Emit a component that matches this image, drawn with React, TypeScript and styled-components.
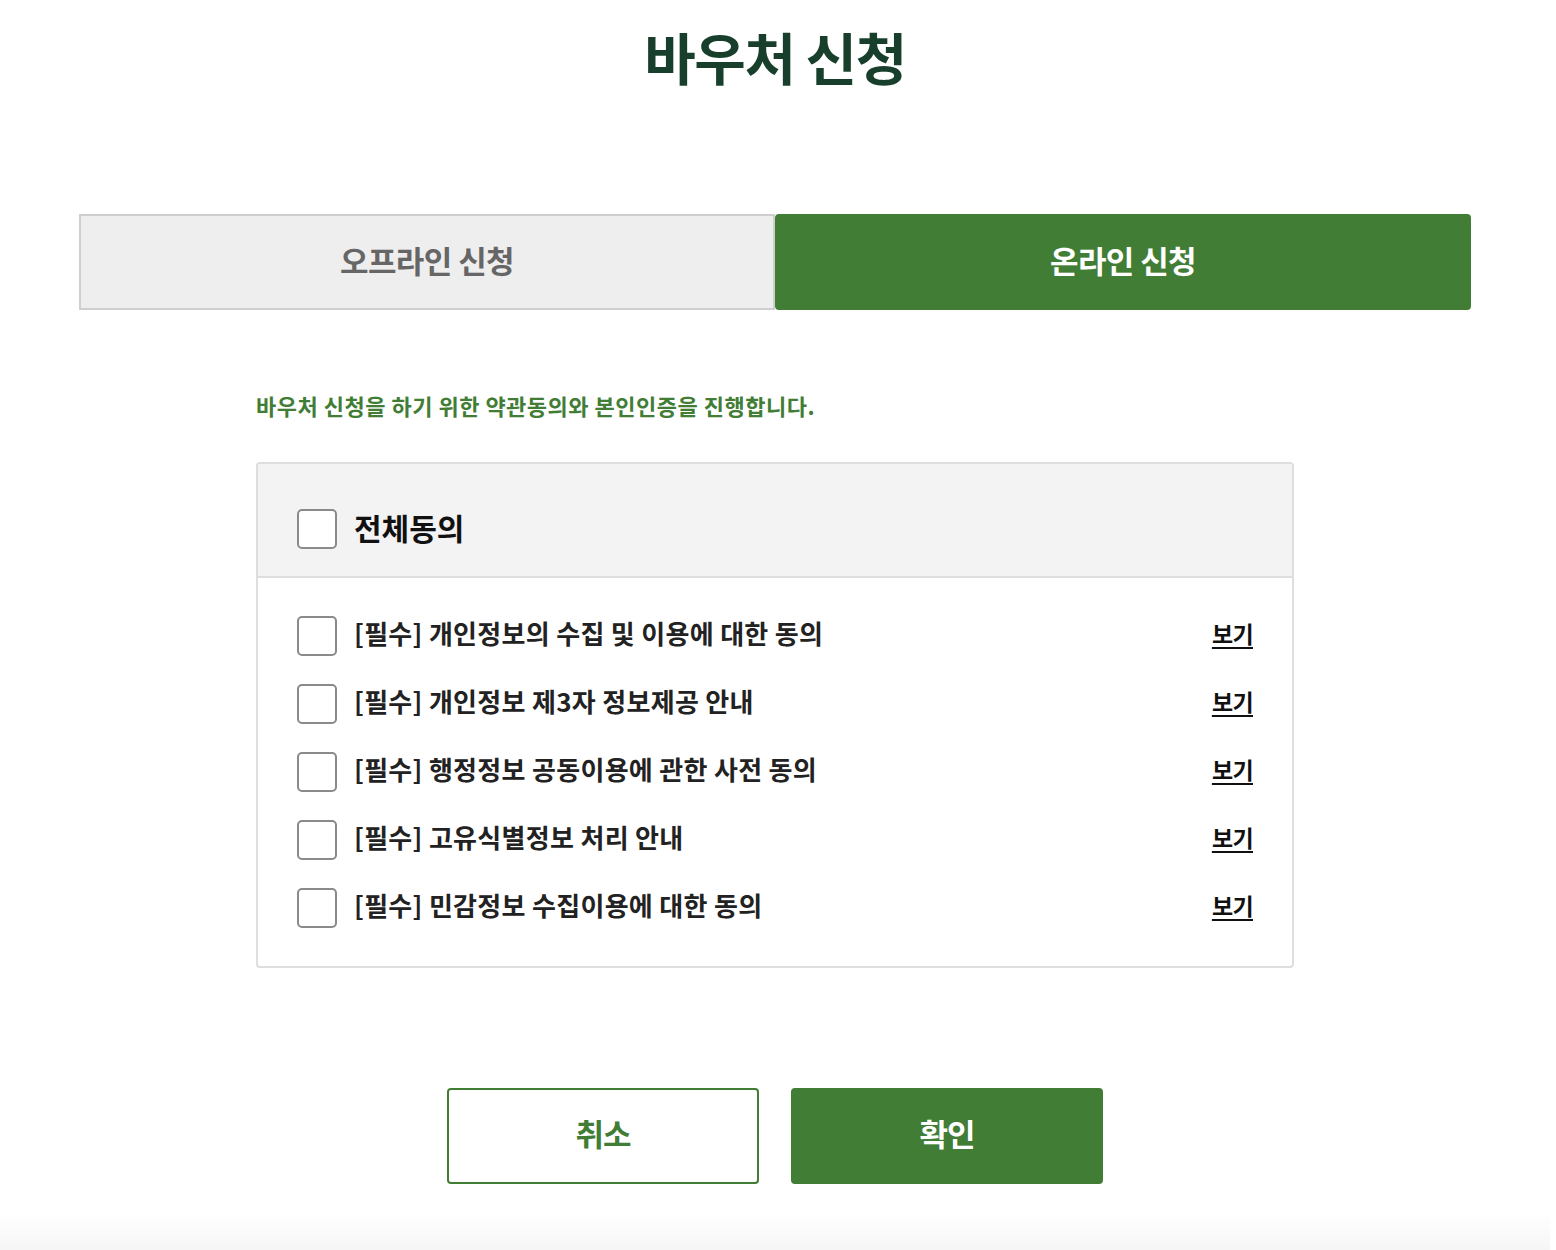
import React from "react";
import styled, { createGlobalStyle } from "styled-components";

const GlobalStyle = createGlobalStyle`
  html, body {
    margin: 0;
    padding: 0;
    background: #fff;
  }
  body {
    font-family: "Noto Sans CJK KR", "Noto Sans", sans-serif;
    color: #222;
  }
`;

const GREEN = "#417d35";

const Page = styled.div`
  width: 1550px;
  min-height: 1250px;
  display: flex;
  flex-direction: column;
  align-items: center;
  background: linear-gradient(to bottom, #fff 0, #fff 1212px, #f6f6f6 1250px);
`;

const Title = styled.h1`
  margin: 14px 0 0;
  font-size: 56px;
  line-height: 84px;
  font-weight: 700;
  letter-spacing: -1.5px;
  color: #173f2b;
`;

const Tabs = styled.div`
  margin-top: 116px;
  width: 1392px;
  display: grid;
  grid-template-columns: 1fr 1fr;
`;

const Tab = styled.button<{ $active?: boolean }>`
  height: 96px;
  box-sizing: border-box;
  display: flex;
  align-items: center;
  justify-content: center;
  font-family: inherit;
  font-size: 31px;
  font-weight: 700;
  letter-spacing: -0.6px;
  cursor: pointer;
  border: ${(p) => (p.$active ? "none" : "2px solid #cfcfcf")};
  border-radius: ${(p) => (p.$active ? "4px" : "0")};
  background: ${(p) => (p.$active ? GREEN : "#eeeeee")};
  color: ${(p) => (p.$active ? "#fff" : "#666")};
  padding: 0 0 6px;
`;

const Content = styled.div`
  width: 1038px;
  display: flex;
  flex-direction: column;
`;

const Desc = styled.p`
  margin: 80px 0 0;
  font-size: 22px;
  line-height: 30px;
  font-weight: 700;
  letter-spacing: 0.5px;
  color: ${GREEN};
`;

const AgreeBox = styled.div`
  margin-top: 42px;
  border: 2px solid #dedede;
  border-radius: 4px;
  overflow: hidden;
`;

const AllRow = styled.label`
  height: 114px;
  box-sizing: border-box;
  display: flex;
  align-items: center;
  gap: 17px;
  padding: 18px 0 0 39px;
  background: #f3f3f3;
  border-bottom: 2px solid #dedede;
`;

const Check = styled.span`
  width: 40px;
  height: 40px;
  box-sizing: border-box;
  border: 2px solid #8a8a8a;
  border-radius: 5px;
  background: #fff;
  flex-shrink: 0;
`;

const AllText = styled.span`
  font-size: 30px;
  font-weight: 700;
  letter-spacing: 0;
  color: #111;
  padding-bottom: 4px;
`;

const List = styled.ul`
  list-style: none;
  margin: 0;
  padding: 38px 39px 38px 39px;
  display: flex;
  flex-direction: column;
  gap: 28px;
`;

const Item = styled.li`
  display: flex;
  align-items: center;
  height: 40px;
  gap: 17px;
`;

const ItemText = styled.span`
  flex: 1;
  font-size: 26px;
  font-weight: 700;
  letter-spacing: 0.3px;
  color: #222;
  padding-bottom: 8px;
`;

const ViewLink = styled.a`
  font-size: 23px;
  font-weight: 700;
  letter-spacing: -0.6px;
  color: #111;
  text-decoration: underline;
  text-decoration-thickness: 2px;
  text-underline-offset: 4px;
  cursor: pointer;
  padding-bottom: 6px;
`;

const Buttons = styled.div`
  margin-top: 120px;
  display: flex;
  gap: 32px;
`;

const Btn = styled.button<{ $primary?: boolean }>`
  width: 312px;
  height: 96px;
  box-sizing: border-box;
  border-radius: 4px;
  border: 2px solid ${GREEN};
  background: ${(p) => (p.$primary ? GREEN : "#fff")};
  color: ${(p) => (p.$primary ? "#fff" : GREEN)};
  font-family: inherit;
  font-size: 31px;
  font-weight: 700;
  letter-spacing: -1px;
  cursor: pointer;
  padding: 0 0 7px;
`;

const items = [
  "[필수] 개인정보의 수집 및 이용에 대한 동의",
  "[필수] 개인정보 제3자 정보제공 안내",
  "[필수] 행정정보 공동이용에 관한 사전 동의",
  "[필수] 고유식별정보 처리 안내",
  "[필수] 민감정보 수집이용에 대한 동의",
];

export default function App() {
  return (
    <>
      <GlobalStyle />
      <Page>
        <Title>바우처 신청</Title>
        <Tabs>
          <Tab>오프라인 신청</Tab>
          <Tab $active>온라인 신청</Tab>
        </Tabs>
        <Content>
          <Desc>바우처 신청을 하기 위한 약관동의와 본인인증을 진행합니다.</Desc>
          <AgreeBox>
            <AllRow>
              <Check />
              <AllText>전체동의</AllText>
            </AllRow>
            <List>
              {items.map((t) => (
                <Item key={t}>
                  <Check />
                  <ItemText>{t}</ItemText>
                  <ViewLink>보기</ViewLink>
                </Item>
              ))}
            </List>
          </AgreeBox>
        </Content>
        <Buttons>
          <Btn>취소</Btn>
          <Btn $primary>확인</Btn>
        </Buttons>
      </Page>
    </>
  );
}
